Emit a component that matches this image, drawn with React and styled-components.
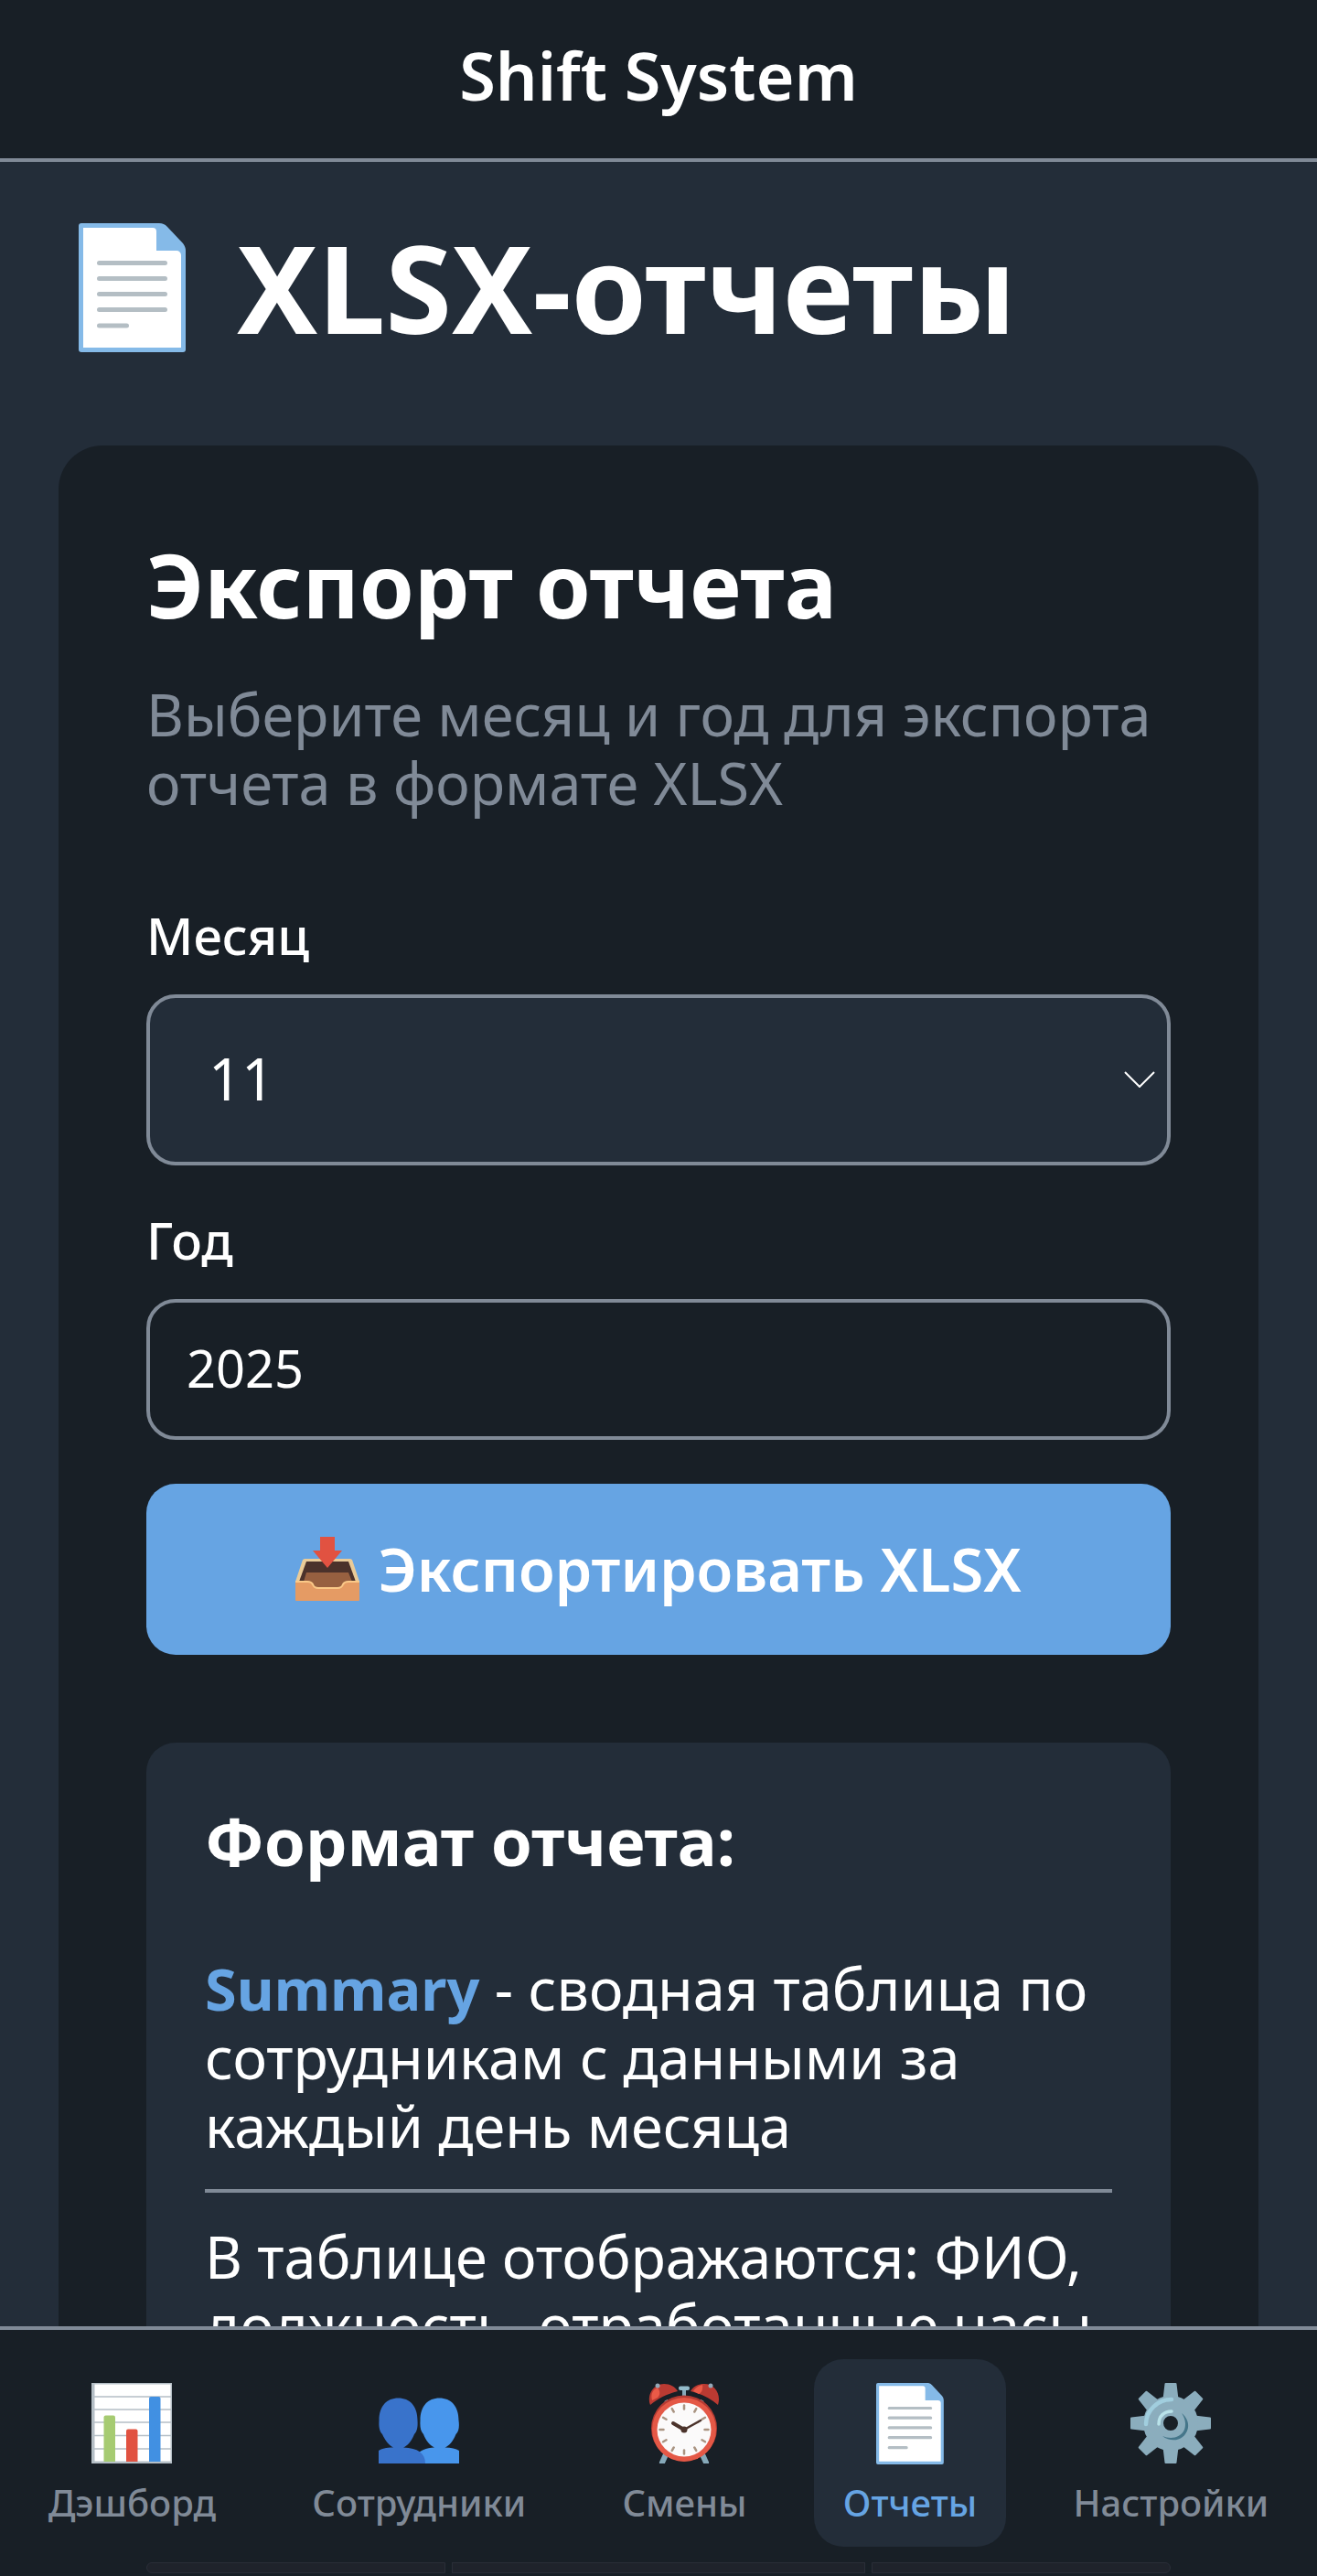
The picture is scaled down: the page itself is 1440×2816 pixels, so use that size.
import { useState } from "react";
import styled, { createGlobalStyle } from "styled-components";

const months = [1, 2, 3, 4, 5, 6, 7, 8, 9, 10, 11, 12];

const tabs = [
  { id: "dashboard", label: "Дэшборд", Icon: ChartIcon },
  { id: "employees", label: "Сотрудники", Icon: PeopleIcon },
  { id: "shifts", label: "Смены", Icon: ClockIcon },
  { id: "reports", label: "Отчеты", Icon: PageIcon },
  { id: "settings", label: "Настройки", Icon: GearIcon },
];

function App() {
  return (
    <Screen>
      <GlobalStyle />
      <Header>Shift System</Header>
      <Main>
        <Title>
          <PageIcon height={141} />
          XLSX-отчеты
        </Title>
        <ExportCard />
      </Main>
      <TabBar active="reports" />
    </Screen>
  );
}

function ExportCard() {
  const [month, setMonth] = useState(11);
  const [year, setYear] = useState("2025");

  return (
    <Card>
      <CardTitle>Экспорт отчета</CardTitle>
      <Hint>Выберите месяц и год для экспорта отчета в формате XLSX</Hint>
      <Form onSubmit={(e) => e.preventDefault()}>
        <Field>
          <Label htmlFor="month">Месяц</Label>
          <SelectWrap>
            <Select
              id="month"
              value={month}
              onChange={(e) => setMonth(Number(e.target.value))}
            >
              {months.map((m) => (
                <option key={m} value={m}>
                  {m}
                </option>
              ))}
            </Select>
            <Chevron viewBox="0 0 34 18" aria-hidden="true">
              <path d="M1 1l16 16L33 1" />
            </Chevron>
          </SelectWrap>
        </Field>
        <Field>
          <Label htmlFor="year">Год</Label>
          <YearInput
            id="year"
            inputMode="numeric"
            value={year}
            onChange={(e) => setYear(e.target.value)}
          />
        </Field>
        <ExportButton type="submit">
          <InboxIcon />
          Экспортировать XLSX
        </ExportButton>
      </Form>
      <Info>
        <InfoTitle>Формат отчета:</InfoTitle>
        <InfoList>
          <InfoItem>
            <strong>Summary</strong> - сводная таблица по сотрудникам с данными
            за каждый день месяца
          </InfoItem>
          <InfoItem>
            В таблице отображаются: ФИО, должность, отработанные часы
          </InfoItem>
        </InfoList>
      </Info>
    </Card>
  );
}

function TabBar({ active }) {
  return (
    <Nav>
      {tabs.map(({ id, label, Icon }) => (
        <Tab key={id} href={`#${id}`} $active={id === active}>
          <TabIcon>
            <Icon />
          </TabIcon>
          {label}
        </Tab>
      ))}
      <Hints aria-hidden="true">
        <i />
        <i />
        <i />
      </Hints>
    </Nav>
  );
}

function PageIcon({ height = 89 }) {
  return (
    <svg height={height} viewBox="0 0 117 141" aria-hidden="true">
      <path
        d="M3 0h85c4 0 6 1 9 4l17 18c2 3 3 5 3 8v108a3 3 0 0 1-3 3H3a3 3 0 0 1-3-3V3a3 3 0 0 1 3-3z"
        fill="#85bae8"
      />
      <path d="M5 5h76a4 4 0 0 1 4 4v21h22a5 5 0 0 1 5 5v101H5z" fill="#fff" />
      <path
        d="M22.5 43.5h72M22.5 60.5h72M22.5 77.5h72M22.5 94.5h72M22.5 112h30"
        stroke="#b4bec4"
        strokeWidth="5"
        strokeLinecap="round"
      />
    </svg>
  );
}

function ChartIcon() {
  return (
    <svg width="88" height="88" viewBox="0 0 88 88" aria-hidden="true">
      <rect width="88" height="88" fill="#b5bfc6" />
      <rect x="3.5" y="1.5" width="83" height="84" fill="#fff" />
      <path
        d="M3 15h84M3 29h84M3 43h84M3 57.5h84M3 72h84"
        stroke="#b5bfc6"
        strokeWidth="1.5"
      />
      <path d="M13.5 86V37.5a2 2 0 0 1 2-2H24a2 2 0 0 1 2 2V86z" fill="#a6cb72" />
      <path d="M38 86V52.5a2 2 0 0 1 2-2h8.5a2 2 0 0 1 2 2V86z" fill="#e15241" />
      <path d="M63 86V17a2 2 0 0 1 2-2h8.5a2 2 0 0 1 2 2v69z" fill="#4190e2" />
    </svg>
  );
}

function PeopleIcon() {
  return (
    <svg width="88" height="88" viewBox="0 0 88 88" aria-hidden="true">
      <path
        d="M66.5 16.5C79 16.5 87.5 25 87.5 41c1 7 0 12-3 15-3 8-7.5 12.5-12 14.5 7 0 12 1.5 15.5 3.5v14H35l5-9c5-5 12-8 21-8.5C56 68 51.5 63 49 56c-3-3-4-8-3.5-15C45.5 25 54 16.500 66.5 16.5z"
        fill="#4896ec"
      />
      <path
        d="M21.5 16.5C34 16.5 42.5 25 42.5 41c.5 7-.5 12-3.5 15-3 8-7.5 12.5-12 14.5C43 71 51 77 51 88H0V74c3-2 8-3.5 16-3.5C11.5 68 7 63 4 56c-3-3-4-8-3.500-15C.5 25 9 16.5 21.5 16.5z"
        fill="#3973cb"
      />
    </svg>
  );
}

function ClockIcon() {
  const ticks = [0, 30, 60, 90, 120, 150, 180, 210, 240, 270, 300, 330];
  return (
    <svg width="88" height="88" viewBox="0 0 88 88" aria-hidden="true">
      <path
        d="M25 76l-5 11M63 76l5 11"
        stroke="#86a9b9"
        strokeWidth="6"
        strokeLinecap="round"
      />
      <path d="M44 6v10" stroke="#86a9b9" strokeWidth="4" />
      <rect x="38" y="3.5" width="12" height="4.5" rx="2" fill="#94bccb" />
      <path d="M24 19l4 6M64 19l-4 6" stroke="#9ab" strokeWidth="4" />
      <path
        d="M7 24C3 12 11 1 22 1c7 0 12 3 15 8-12 3-22 8-30 15z"
        fill="#ba3a32"
      />
      <path d="M9 19c-2-7 1-12 6-14 3 4 3 8 0 11z" fill="#ea5a47" />
      <path
        d="M81 24C85 12 77 1 66 1c-7 0-12 3-15 8 12 3 22 8 30 15z"
        fill="#ba3a32"
      />
      <path d="M54 9c2-4 6-6 10-7 1 5-1 9-4 10z" fill="#ea5a47" />
      <circle cx="15" cy="3" r="2.5" fill="#94a9b8" />
      <circle cx="73" cy="3" r="2.5" fill="#94a9b8" />
      <circle cx="44" cy="49.5" r="36" fill="#b43a32" />
      <circle cx="44" cy="51" r="35" fill="#e45846" />
      <circle cx="44" cy="51" r="29.5" fill="#fbfafa" />
      {ticks.map((a) => (
        <path
          key={a}
          d="M44 24.5v4"
          transform={`rotate(${a} 44 51)`}
          stroke="#a99380"
          strokeWidth="2.5"
          strokeLinecap="round"
        />
      ))}
      <path d="M44 51L32 44" stroke="#4b332b" strokeWidth="4" strokeLinecap="round" />
      <path d="M44 51l18-10" stroke="#4b332b" strokeWidth="2.5" strokeLinecap="round" />
      <circle cx="44" cy="51" r="3.5" fill="#4b332b" />
    </svg>
  );
}

function GearIcon() {
  const teeth = [0, 45, 90, 135, 180, 225, 270, 315];
  return (
    <svg width="88" height="88" viewBox="0 0 88 88" aria-hidden="true">
      {teeth.map((a) => (
        <path
          key={a}
          d="M38.5 0h11a1 1 0 0 1 1 1l2 17h-17l2-17a1 1 0 0 1 1-1z"
          transform={`rotate(${a} 44 44)`}
          fill="#8badbd"
        />
      ))}
      <circle cx="44" cy="44" r="19" fill="none" stroke="#8badbd" strokeWidth="22" />
      <path
        d="M17 45c0-15 13-27 28-27"
        fill="none"
        stroke="#a1cede"
        strokeWidth="4.5"
        strokeLinecap="round"
      />
      <path
        d="M31 45c0-9 6-14 14-14"
        fill="none"
        stroke="#b9e2e9"
        strokeWidth="3.5"
        strokeLinecap="round"
      />
      <path
        d="M56 33c5 4 8 10 7 16-3 14-18 17-28 9 9 4 20 2 24-7 2-6 1-12-3-18z"
        fill="#45768a"
      />
    </svg>
  );
}

function InboxIcon() {
  return (
    <svg width="70" height="70" viewBox="0 0 70 70" aria-hidden="true">
      <path d="M10 24h50l2 1 8 24H0l8-24z" fill="#eacb98" />
      <path d="M12 27h46l8 22H4z" fill="#4b322b" />
      <path d="M12 39h46l4 10v8H9v-8z" fill="#976040" />
      <path
        d="M0 49h13c3 0 5 1 6 3 1 3 3 4 6 4h21c3 0 5-1 6-4 1-2 3-3 6-3h12v20a1 1 0 0 1-1 1H1a1 1 0 0 1-1-1z"
        fill="#e59b64"
      />
      <path
        d="M0 49h13c3 0 5 1 6 3 1 3 3 4 6 4h21c3 0 5-1 6-4 1-2 3-3 6-3h12"
        fill="none"
        stroke="#fbc988"
        strokeWidth="2"
      />
      <path d="M27 0h16v15h8L35 34 19 15h8z" fill="#e15241" />
    </svg>
  );
}

const GlobalStyle = createGlobalStyle`
  * {
    box-sizing: border-box;
  }
  body {
    margin: 0;
    background: #232d39;
    color: #fff;
    font-family: "Noto Sans", sans-serif;
  }
`;
const Screen = styled.div`
  display: flex;
  flex-direction: column;
  height: 100vh;
`;
const Header = styled.header`
  padding: 28px 32px 36px;
  border-bottom: 4px solid #808a97;
  background: #181f26;
  font-size: 72px;
  font-weight: 600;
  line-height: 109px;
  text-align: center;
`;
const Main = styled.main`
  flex: 1;
  min-height: 0;
  padding: 64px 64px 0;
  overflow-y: auto;
  scrollbar-width: none;
`;
const Title = styled.h1`
  display: flex;
  align-items: center;
  gap: 56px;
  margin: 0 0 100px;
  padding-left: 22px;
  font-size: 132px;
  font-weight: 700;
  line-height: 146px;
`;
const Card = styled.section`
  padding: 96px;
  border-radius: 48px;
  background: #181f26;
`;
const CardTitle = styled.h2`
  margin: 0 0 48px;
  font-size: 96px;
  font-weight: 700;
  line-height: 112px;
`;
const Hint = styled.p`
  margin: 0 0 96px;
  color: #808a97;
  font-size: 63px;
  line-height: 75px;
`;
const Form = styled.form`
  display: flex;
  flex-direction: column;
  gap: 48px;
`;
const Field = styled.div`
  display: flex;
  flex-direction: column;
  gap: 32px;
`;
const Label = styled.label`
  font-size: 56px;
  font-weight: 500;
  line-height: 66px;
`;
const SelectWrap = styled.div`
  position: relative;
`;
const Select = styled.select`
  display: block;
  width: 100%;
  height: 187px;
  padding: 0 64px 4px;
  border: 4px solid #808a97;
  border-radius: 32px;
  background: #232d39;
  color: #fff;
  font: inherit;
  font-size: 63px;
  appearance: none;
`;
const Chevron = styled.svg`
  position: absolute;
  top: 84px;
  right: 17px;
  width: 34px;
  fill: none;
  stroke: #fff;
  stroke-width: 2;
  pointer-events: none;
`;
const YearInput = styled.input`
  width: 100%;
  height: 154px;
  padding: 0 40px 4px;
  border: 4px solid #808a97;
  border-radius: 32px;
  background: #181f26;
  color: #fff;
  font: inherit;
  font-size: 56px;
`;
const ExportButton = styled.button`
  display: flex;
  align-items: center;
  justify-content: center;
  gap: 20px;
  height: 187px;
  padding: 0 32px 2px;
  border: 0;
  border-radius: 32px;
  background: #66a4e3;
  color: #fff;
  font: inherit;
  font-size: 65px;
  font-weight: 600;
  cursor: pointer;
`;
const Info = styled.div`
  margin-top: 96px;
  padding: 64px;
  border-radius: 32px;
  background: #232d39;
`;
const InfoTitle = styled.h3`
  margin: 0 0 48px;
  font-size: 72px;
  font-weight: 700;
  line-height: 87px;
`;
const InfoList = styled.ul`
  margin: 0;
  padding: 0;
  list-style: none;
`;
const InfoItem = styled.li`
  padding: 32px 0;
  font-size: 63px;
  line-height: 75px;
  & + & {
    border-top: 4px solid #808a97;
  }
  strong {
    color: #66a4e3;
    font-weight: 700;
  }
`;
const Nav = styled.nav`
  position: relative;
  display: flex;
  justify-content: space-around;
  padding: 32px 0;
  border-top: 4px solid #808a97;
  background: #181f26;
`;
const Tab = styled.a`
  display: flex;
  flex-direction: column;
  align-items: center;
  gap: 16px;
  padding: 24px 32px;
  border-radius: 32px;
  background: ${({ $active }) => ($active ? "#232d39" : "transparent")};
  color: ${({ $active }) => ($active ? "#66a4e3" : "#808a97")};
  font-size: 40px;
  font-weight: 500;
  line-height: 49px;
  text-decoration: none;
`;
const TabIcon = styled.span`
  display: flex;
  align-items: center;
  height: 92px;
`;
// three-button area along the bottom edge
const Hints = styled.div`
  position: absolute;
  left: 160px;
  right: 160px;
  bottom: 3px;
  display: flex;
  gap: 7px;
  height: 12px;
  i {
    flex: 327;
    border: 1px solid #2a2e38;
    background: #1f232b;
  }
  i:nth-child(2) {
    flex: 453;
  }
  i:first-child {
    border-radius: 6px 0 0 6px;
  }
  i:last-child {
    border-radius: 0 6px 6px 0;
  }
`;

export default App;
